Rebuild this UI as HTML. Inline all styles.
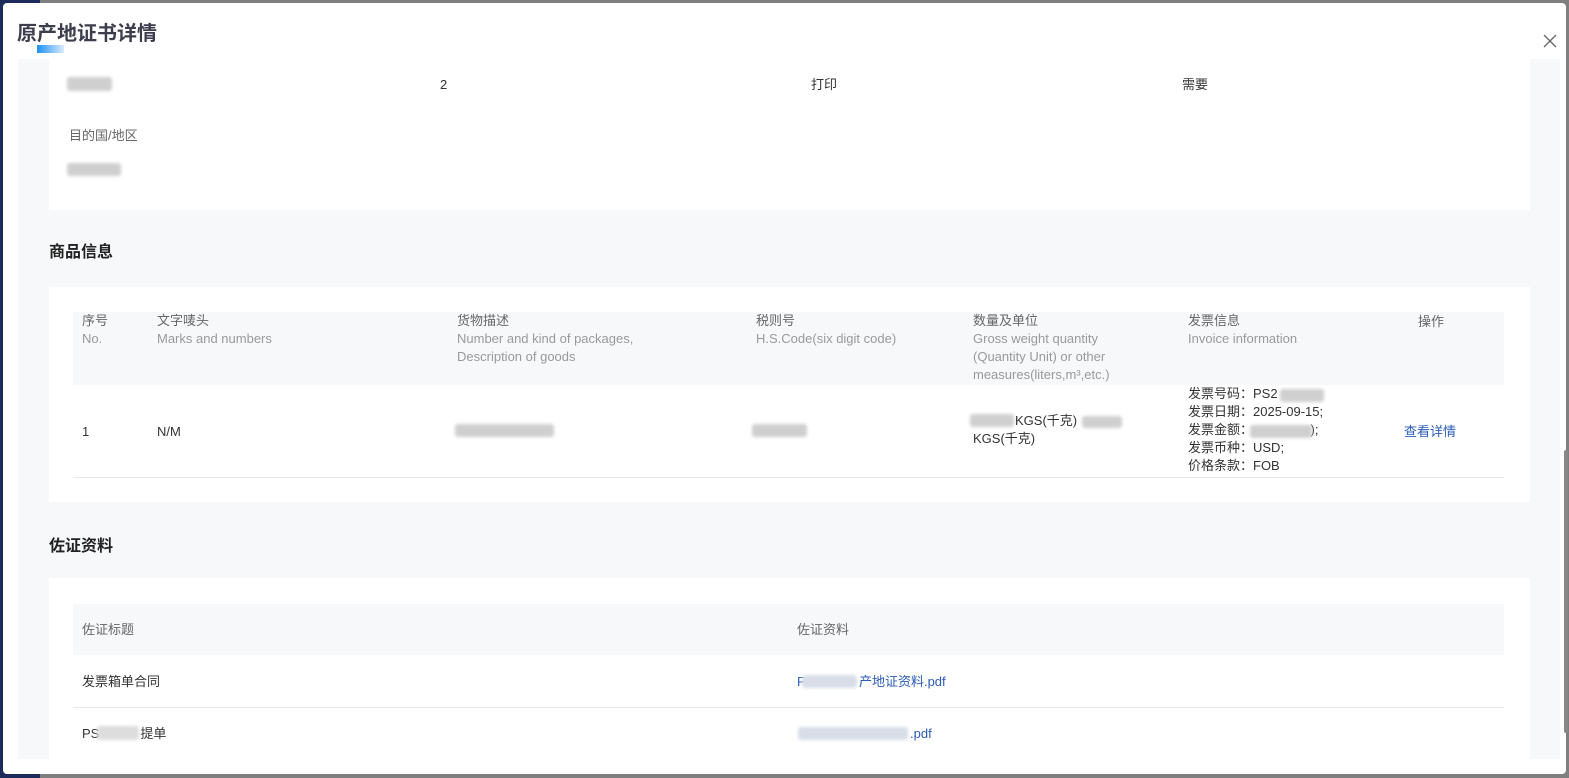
<!DOCTYPE html>
<html><head><meta charset="utf-8"><style>
*{margin:0;padding:0;box-sizing:border-box}
body{width:1569px;height:778px;overflow:hidden;background:#7f7f7f;font-family:"Liberation Sans","Noto Sans CJK SC",sans-serif;font-size:13px;color:#333;position:relative}
.a{position:absolute;white-space:nowrap}
.blur{position:absolute;background:#cfcfcf;border-radius:3px;filter:blur(1.5px)}
.g{color:#999}
.lnk{color:#2a5cb8}
</style></head><body>
<div class="a" style="left:0;top:0;width:40px;height:778px;background:#1d2b5a"></div>
<div class="a" style="left:3px;top:3px;width:1563px;height:771px;background:#fff;border-radius:4px"></div>
<div class="a" style="left:17px;top:17px;font-size:20px;font-weight:bold;color:#3d3d4d">原产地证书详情</div>
<div class="a" style="left:37px;top:45px;width:27px;height:8px;background:linear-gradient(90deg,#1e90f0,#d8ecfd)"></div>
<svg class="a" style="left:1543px;top:34px" width="14" height="14" viewBox="0 0 14 14"><path d="M1 1L13 13M13 1L1 13" stroke="#666" stroke-width="1.3"/></svg>
<div class="a" style="left:18px;top:59px;width:1542px;height:700px;background:#f7f8fa"></div>
<div class="a" style="left:1564px;top:450px;width:4px;height:283px;background:#888;border-radius:2px"></div>
<div class="a" style="left:49px;top:59px;width:1481px;height:151px;background:#fff"></div>
<div class="blur" style="left:67px;top:77px;width:45px;height:14px"></div>
<div class="a" style="left:440px;top:77px">2</div>
<div class="a" style="left:811px;top:74px">打印</div>
<div class="a" style="left:1182px;top:74px">需要</div>
<div class="a" style="left:69px;top:125px;color:#666">目的国/地区</div>
<div class="blur" style="left:67px;top:163px;width:54px;height:13px"></div>
<div class="a" style="left:49px;top:238px;font-size:16px;font-weight:bold;color:#222">商品信息</div>
<div class="a" style="left:49px;top:287px;width:1481px;height:215px;background:#fff"></div>
<div class="a" style="left:73px;top:312px;width:1431px;height:73px;background:#f7f8fa"></div>
<div class="a" style="left:73px;top:477px;width:1431px;height:1px;background:#e8e8e8"></div>
<div class="a" style="left:82px;top:312px;line-height:18px;color:#666">序号<br><span class="g">No.</span></div>
<div class="a" style="left:157px;top:312px;line-height:18px;color:#666">文字唛头<br><span class="g">Marks and numbers</span></div>
<div class="a" style="left:457px;top:312px;line-height:18px;color:#666">货物描述<br><span class="g">Number and kind of packages,<br>Description of goods</span></div>
<div class="a" style="left:756px;top:312px;line-height:18px;color:#666">税则号<br><span class="g">H.S.Code(six digit code)</span></div>
<div class="a" style="left:973px;top:312px;line-height:18px;color:#666">数量及单位<br><span class="g">Gross weight quantity<br>(Quantity Unit) or other<br>measures(liters,m³,etc.)</span></div>
<div class="a" style="left:1188px;top:312px;line-height:18px;color:#666">发票信息<br><span class="g">Invoice information</span></div>
<div class="a" style="left:1418px;top:311px;color:#666">操作</div>
<div class="a" style="left:82px;top:424px">1</div>
<div class="a" style="left:157px;top:424px">N/M</div>
<div class="blur" style="left:455px;top:424px;width:99px;height:13px"></div>
<div class="blur" style="left:752px;top:424px;width:55px;height:13px"></div>
<div class="blur" style="left:970px;top:414px;width:44px;height:13px"></div>
<div class="a" style="left:973px;top:412px;line-height:18px"><span style="margin-left:42px">KGS(千克)</span><br>KGS(千克)</div>
<div class="blur" style="left:1082px;top:416px;width:40px;height:12px"></div>
<div class="a" style="left:1188px;top:385px;line-height:18px">发票号码：PS2<br>发票日期：2025-09-15;<br>发票金额：<span style="margin-left:64px"></span>);<br>发票币种：USD;<br>价格条款：FOB</div>
<div class="blur" style="left:1280px;top:389px;width:44px;height:13px"></div>
<div class="blur" style="left:1250px;top:425px;width:62px;height:13px"></div>
<div class="a lnk" style="left:1404px;top:421px">查看详情</div>
<div class="a" style="left:49px;top:532px;font-size:16px;font-weight:bold;color:#222">佐证资料</div>
<div class="a" style="left:49px;top:578px;width:1481px;height:181px;background:#fff"></div>
<div class="a" style="left:73px;top:604px;width:1431px;height:51px;background:#f7f8fa"></div>
<div class="a" style="left:73px;top:707px;width:1431px;height:1px;background:#e8e8e8"></div>
<div class="a" style="left:82px;top:619px;color:#666">佐证标题</div>
<div class="a" style="left:797px;top:619px;color:#666">佐证资料</div>
<div class="a" style="left:82px;top:671px">发票箱单合同</div>
<div class="a lnk" style="left:797px;top:671px">F<span style="margin-left:54px"></span>产地证资料.pdf</div>
<div class="blur" style="left:802px;top:675px;width:55px;height:13px;background:#d8dde8"></div>
<div class="a" style="left:82px;top:723px">PS<span style="margin-left:41px"></span>提单</div>
<div class="blur" style="left:97px;top:726px;width:42px;height:14px;background:#ddd"></div>
<div class="a lnk" style="left:910px;top:726px">.pdf</div>
<div class="blur" style="left:798px;top:727px;width:110px;height:13px;background:#d8dde8"></div>
</body></html>
